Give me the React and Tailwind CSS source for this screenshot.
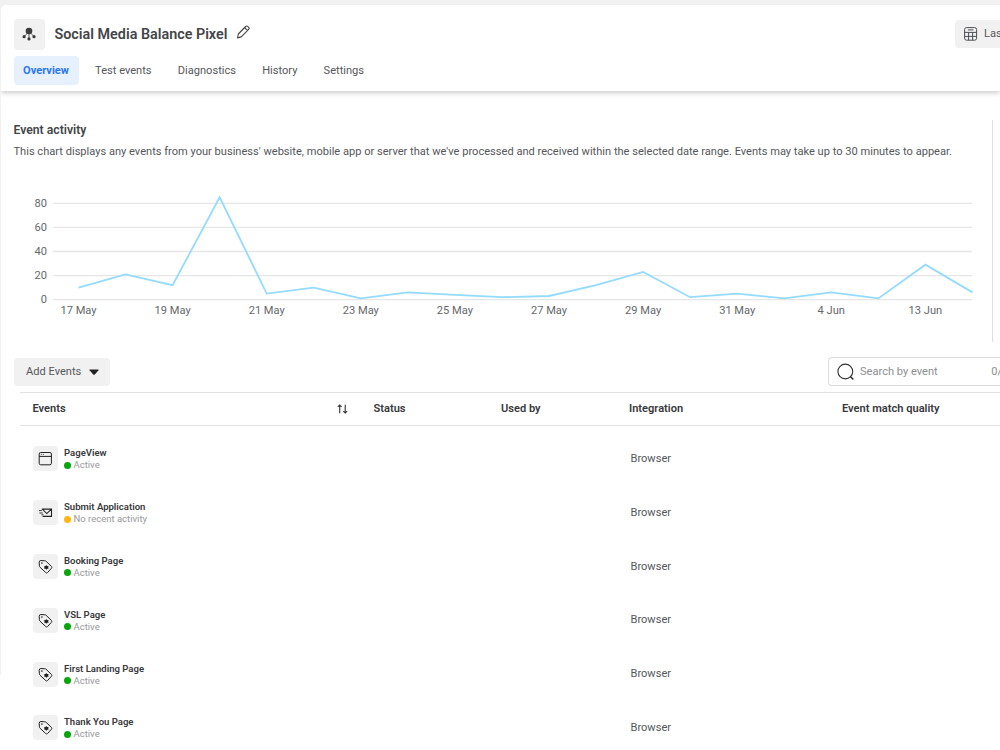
import React from "react";

const tabs = ["Overview", "Test events", "Diagnostics", "History", "Settings"];

const points = [10, 21, 12, 85, 5, 10, 1, 6, 4, 2, 3, 12, 23, 2, 5, 1, 6, 1, 29, 6];
const days = ["17 May", "19 May", "21 May", "23 May", "25 May", "27 May", "29 May", "31 May", "4 Jun", "13 Jun"];

const events = [
  { name: "PageView", icon: "window", active: true },
  { name: "Submit Application", icon: "mail", active: false },
  { name: "Booking Page", icon: "tag", active: true },
  { name: "VSL Page", icon: "tag", active: true },
  { name: "First Landing Page", icon: "tag", active: true },
  { name: "Thank You Page", icon: "tag", active: true },
];

function PixelIcon() {
  return (
    <svg width="14" height="14" viewBox="0 0 14 14" fill="#3c3c3c" stroke="#3c3c3c">
      <circle cx="7" cy="4" r="3.3" stroke="none" />
      <path d="M7 6v5M5.5 6L2.3 9.4M8.5 6L11.9 9.4" fill="none" strokeWidth="0.8" />
      <circle cx="2.1" cy="9.7" r="1.6" stroke="none" />
      <circle cx="12" cy="9.7" r="1.6" stroke="none" />
      <circle cx="7" cy="11.9" r="1.6" stroke="none" />
    </svg>
  );
}

function PencilIcon() {
  return (
    <svg width="14" height="14" viewBox="0 0 14 14" fill="none" stroke="#444" strokeWidth="1.1" strokeLinejoin="round">
      <path d="M.6 12.9l.7-3.9L8.7 1.5q1-1 2-.1l1 .9q.9 1-.1 2L4.3 11.9L.6 12.9zM7.6 2.6l3 3" />
    </svg>
  );
}

function CalendarIcon() {
  return (
    <svg width="14" height="14" viewBox="0 0 14 14" fill="none" stroke="#4b4f54" strokeWidth="1">
      <rect x="0.6" y="0.6" width="12" height="12.6" rx="2" />
      <path d="M4 2.9h5.4M.6 5.4h12M.6 9.4h12M4.6 5.4v7.8M8.6 5.4v7.8" />
    </svg>
  );
}

function EventIcon({ type }) {
  if (type === "window") {
    return (
      <svg width="15" height="15" viewBox="0 0 15 15" fill="none" stroke="#222" strokeWidth="1">
        <rect x="1.2" y="1.5" width="12.2" height="12.3" rx="1.5" />
        <path d="M1.2 5.4h12.2" />
        <path d="M2.8 3.4h1M4.8 3.4h1" strokeWidth="0.8" />
      </svg>
    );
  }
  if (type === "mail") {
    return (
      <svg width="15" height="15" viewBox="0 0 15 15" fill="none" stroke="#222" strokeWidth="1.1">
        <path d="M3.8 4.1h9.7v7.3H4.6M4.6 4.4l4.2 4.2L13.2 4.4" />
        <path d="M1 5.6h2.8M1.4 8h3.4M3.4 9.8h2" strokeWidth="0.9" />
      </svg>
    );
  }
  return (
    <svg width="15" height="15" viewBox="0 0 15 15" fill="none" stroke="#222" strokeWidth="1" strokeLinejoin="round">
      <path d="M1.2 3.2q0-1.7 1.7-1.7l3.9.3q.7 0 1.3.5l5.4 5.2q.8.9 0 1.7l-4 4.4q-.9.8-1.7 0L2 8.2q-.5-.6-.6-1.3z" />
      <circle cx="3.9" cy="4.1" r="0.8" fill="#222" stroke="none" />
      <path d="M8.2 5.9l.9 1 1.4.1-.3 1.4.5 1.2-1.4.2-.9.9-1-.9-1.4-.3.5-1.3-.3-1.2 1.4-.1z" fill="#222" stroke="none" />
    </svg>
  );
}

function ActivityChart() {
  const line = points.map((v, i) => `${78.5 + i * 47.05 - 14},${119.6 - v * 1.204}`).join(" ");

  return (
    <svg width="970" height="150" viewBox="0 0 970 150" className="block" fontFamily="Roboto, sans-serif" fontSize="11.1" fill="#66686b">
      {[80, 60, 40, 20, 0].map((n, i) => (
        <g key={n}>
          <path d={`M39 ${23.3 + i * 24.1}H958`} stroke="#e6e6e6" strokeWidth="1.3" />
          <text x="33" y={27 + i * 24.1} textAnchor="end">{n}</text>
        </g>
      ))}
      <polyline points={line} fill="none" stroke="#94dbff" strokeWidth="1.8" />
      {days.map((d, i) => (
        <text key={d} x={64.5 + i * 94.1} y="134" textAnchor="middle">{d}</text>
      ))}
    </svg>
  );
}

export default function App() {
  return (
    <div className="w-[1000px] h-[750px] overflow-hidden bg-white font-['Roboto',sans-serif] text-[11.09px] text-[#55575a]">
      <div className="h-[675px] bg-[#f1f1f1] pt-[5px] pl-px">
        <div className="h-[745px] w-[999px] rounded-tl-[5px] bg-white overflow-hidden">

          {/* Header */}
          <header className="h-[86px] shadow-[0_2px_5px_rgba(0,0,0,0.2)] pl-[12.5px] pt-[13px]">
            <div className="flex items-center h-8">
              <div className="w-[31px] h-[31px] rounded bg-[#f1f1f1] flex items-center justify-center">
                <PixelIcon />
              </div>
              <h1 className="ml-[10px] pt-[2px] w-[182.5px] text-[14.35px] font-semibold text-[#434548] whitespace-nowrap">Social Media Balance Pixel</h1>
              <div className="-mt-[5px]"><PencilIcon /></div>
              <button className="ml-auto w-[45px] h-7 bg-[#f1f1f1] rounded-l flex items-center pl-[9px] overflow-hidden">
                <span className="shrink-0"><CalendarIcon /></span>
                <span className="ml-[6px] whitespace-nowrap">Las</span>
              </button>
            </div>
            <nav className="flex mt-[6px]">
              {tabs.map((t, i) => (
                <button
                  key={t}
                  className={`h-[29px] pt-px rounded whitespace-nowrap ${
                    i === 0 ? "w-[65px] bg-[#e7f1fe] text-[#2b76f3] font-bold mr-[3.5px]" : "px-[13.1px]"
                  }`}
                >
                  {t}
                </button>
              ))}
            </nav>
          </header>

          {/* Event activity */}
          <section className="mt-[29px] h-[222px] flex">
            <div className="w-[992px] pl-[12.5px] border-r border-[#dedede] shrink-0">
              <h2 className="pt-px text-[12.2px] leading-[18px] font-semibold text-[#434548]">Event activity</h2>
              <p className="mt-[5px] leading-4 whitespace-nowrap">
                This chart displays any events from your business' website, mobile app or server that we've processed and received within the selected date range. Events may take up to 30 minutes to appear.
              </p>
              <div className="mt-[20px]"><ActivityChart /></div>
            </div>
          </section>

          {/* Toolbar */}
          <div className="mt-[15px] pl-[12.5px] h-[29px] flex justify-between">
            <button className="w-[96.5px] h-7 mt-px bg-[#f1f1f1] rounded flex items-center pl-[12.5px]">
              Add Events
              <svg className="ml-[8px]" width="10" height="6" viewBox="0 0 10 6"><path d="M1 .4h8q1 0 .5.8L6 5.2q-1 1-2 0L.5 1.2Q0 .4 1 .4z" fill="#222" /></svg>
            </button>
            <div className="w-[172px] h-[29px] border border-r-0 border-[#dcdcdc] rounded-l flex items-center pl-[8px] text-[#8c8e91]">
              <svg width="18" height="18" viewBox="0 0 18 18" fill="none" stroke="#333" strokeWidth="1.1">
                <circle cx="8.3" cy="8.5" r="7.4" />
                <path d="M13.3 13.5l3 3" strokeWidth="1.6" />
              </svg>
              <span className="ml-[5px] pt-px">Search by event</span>
              <span className="ml-auto -mr-[2px] pt-px">0/</span>
            </div>
          </div>

          {/* Events table */}
          <div className="mt-[6px] ml-[19px]">
            <div className="h-[34px] border-y border-[#e2e2e2] flex items-center pl-[12.5px] font-semibold text-[#38393c]">
              <span className="w-[304.5px]">Events</span>
              <svg className="mr-[25.5px] shrink-0" width="11" height="10" viewBox="0 0 11 10" fill="none" stroke="#333" strokeWidth="1.1">
                <path d="M2.7 9.2V1M.8 2.8L2.7 1l1.9 1.8M8.2.8V9M6.3 7.2L8.2 9l1.9-1.8" />
              </svg>
              <span className="w-[127.5px]">Status</span>
              <span className="w-[128px]">Used by</span>
              <span className="w-[213px]">Integration</span>
              <span>Event match quality</span>
            </div>

            <div className="pt-[6px]">
              {events.map((ev) => (
                <div key={ev.name} className="h-[53.8px] flex items-center pl-[12.5px]">
                  <div className="w-[25px] h-[25px] rounded bg-[#f1f1f1] flex items-center justify-center">
                    <EventIcon type={ev.icon} />
                  </div>
                  <div className="ml-[6.5px] w-[566.5px]">
                    <div className="text-[9.55px] leading-[13px] font-semibold text-[#38393c]">{ev.name}</div>
                    <div className="flex items-center text-[9.5px] leading-[12px] text-[#97999b]">
                      <span className={`w-[7px] h-[7px] rounded-full mr-[2.5px] ${ev.active ? "bg-[#08a50c]" : "bg-[#ffb614]"}`}></span>
                      {ev.active ? "Active" : "No recent activity"}
                    </div>
                  </div>
                  <span className="pt-px">Browser</span>
                </div>
              ))}
            </div>
          </div>
        </div>
      </div>
    </div>
  );
}
